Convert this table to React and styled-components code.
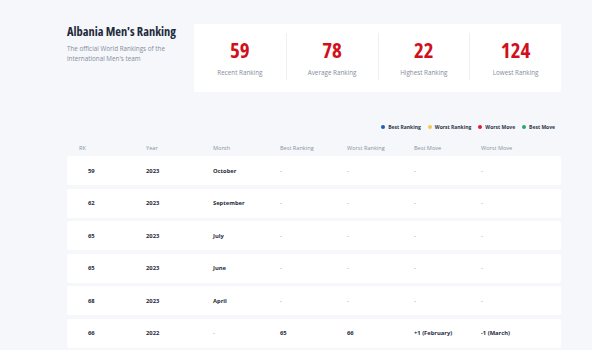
import styled, { createGlobalStyle } from "styled-components";

const GlobalStyle = createGlobalStyle`
  body {
    margin: 0;
    background: #f5f7fa;
    font-family: "Open Sans", "Liberation Sans", sans-serif;
  }
`;

const stats = [
  { value: 59, label: "Recent Ranking" },
  { value: 78, label: "Average Ranking" },
  { value: 22, label: "Highest Ranking" },
  { value: 124, label: "Lowest Ranking" },
];

const legend = [
  { label: "Best Ranking", color: "#1d5fb4" },
  { label: "Worst Ranking", color: "#f2c94c" },
  { label: "Worst Move", color: "#d81f34" },
  { label: "Best Move", color: "#2ea36d" },
];

const columns = ["RK", "Year", "Month", "Best Ranking", "Worst Ranking", "Best Move", "Worst Move"];

const rows = [
  ["59", "2023", "October", "-", "-", "-", "-"],
  ["62", "2023", "September", "-", "-", "-", "-"],
  ["65", "2023", "July", "-", "-", "-", "-"],
  ["65", "2023", "June", "-", "-", "-", "-"],
  ["68", "2023", "April", "-", "-", "-", "-"],
  ["66", "2022", "-", "65", "66", "+1 (February)", "-1 (March)"],
];

function App() {
  return (
    <Page>
      <GlobalStyle />
      <Top>
        <Intro>
          <Title>Albania Men's Ranking</Title>
          <Subtitle>The official World Rankings of the international Men's team</Subtitle>
        </Intro>
        <StatCard>
          {stats.map((s) => (
            <Stat key={s.label}>
              <StatValue>{s.value}</StatValue>
              <StatLabel>{s.label}</StatLabel>
            </Stat>
          ))}
        </StatCard>
      </Top>

      <Legend>
        {legend.map((l) => (
          <LegendItem key={l.label}>
            <Dot $color={l.color} />
            {l.label}
          </LegendItem>
        ))}
      </Legend>

      <HeaderRow>
        {columns.map((c) => (
          <HeadCell key={c}>{c}</HeadCell>
        ))}
      </HeaderRow>

      <Rows>
        {rows.map((r, i) => (
          <Row key={i}>
            {r.map((v, j) => (
              <Cell key={j} $first={j === 0} $dash={v === "-"}>
                {v}
              </Cell>
            ))}
          </Row>
        ))}
      </Rows>
    </Page>
  );
}

const Page = styled.div`
  width: 494px;
  padding: 24px 0 0 67px;
`;

const Top = styled.div`
  display: flex;
  align-items: flex-start;
`;

const Intro = styled.div`
  width: 127px;
  flex-shrink: 0;
`;

const Title = styled.h1`
  margin: 0;
  font-size: 12.4px;
  line-height: 16px;
  font-weight: 700;
  font-stretch: 75%;
  color: #1f2a3c;
  white-space: nowrap;
`;

const Subtitle = styled.p`
  margin: 4px 0 0;
  width: 100px;
  font-size: 6.3px;
  line-height: 10px;
  color: #858d9a;
`;

const StatCard = styled.div`
  flex: 1;
  height: 68px;
  background: #fff;
  border-radius: 2px;
  display: grid;
  grid-template-columns: repeat(4, 1fr);
  padding: 9px 0 12px;
  box-sizing: border-box;
`;

const Stat = styled.div`
  display: flex;
  flex-direction: column;
  align-items: center;
  justify-content: flex-start;
  border-left: 1px solid #eef0f3;

  &:first-child {
    border-left: none;
  }
`;

const StatValue = styled.div`
  margin-top: 5px;
  font-size: 21px;
  line-height: 24px;
  font-weight: 700;
  font-stretch: 75%;
  color: #d0101c;
`;

const StatLabel = styled.div`
  margin-top: 6px;
  font-size: 6.3px;
  line-height: 9px;
  color: #858d9a;
`;

const Legend = styled.div`
  display: flex;
  justify-content: flex-end;
  gap: 7px;
  margin-top: 31px;
  padding-right: 6px;
`;

const LegendItem = styled.div`
  display: flex;
  align-items: center;
  gap: 3px;
  font-size: 5px;
  line-height: 8px;
  font-weight: 700;
  color: #2c3547;
`;

const Dot = styled.span`
  width: 4px;
  height: 4px;
  border-radius: 50%;
  background: ${(p) => p.$color};
`;

const HeaderRow = styled.div`
  display: grid;
  grid-template-columns: repeat(7, 67px);
  padding: 0 12px;
  margin-top: 12px;
  height: 9px;
  align-items: center;
`;

const HeadCell = styled.div`
  font-size: 5.6px;
  color: #8a93a3;
`;

const Rows = styled.div`
  display: flex;
  flex-direction: column;
  gap: 3.6px;
  margin-top: 4px;
`;

const Row = styled.div`
  display: grid;
  grid-template-columns: repeat(7, 67px);
  padding: 0 12px;
  height: 29px;
  align-items: center;
  background: #fff;
  border-radius: 2px;
`;

const Cell = styled.div`
  font-size: 5.8px;
  font-weight: ${(p) => (p.$dash ? 400 : 700)};
  color: ${(p) => (p.$dash ? "#6b7486" : "#1f2a3c")};
  padding-left: ${(p) => (p.$first ? "9px" : "0")};
`;

export default App;
